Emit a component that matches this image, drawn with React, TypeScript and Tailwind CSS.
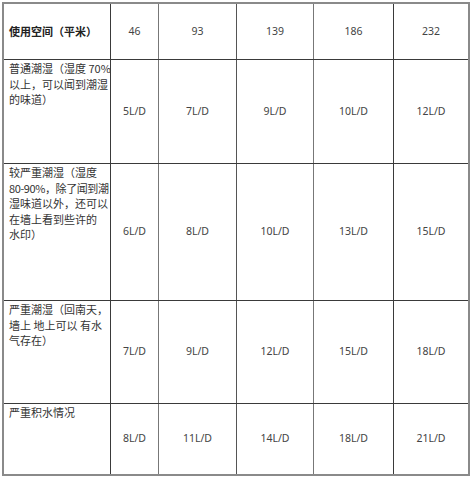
import React from 'react';

const cols = ['46', '93', '139', '186', '232'];

const rows: { lines: string[]; values: string[]; h: string }[] = [
  {
    lines: ['普通潮湿（湿度 70%', '以上，可以闻到潮湿', '的味道）'],
    values: ['5L/D', '7L/D', '9L/D', '10L/D', '12L/D'],
    h: 'h-[104px]',
  },
  {
    lines: ['较严重潮湿（湿度', '80-90%，除了闻到潮', '湿味道以外，还可以', '在墙上看到些许的', '水印）'],
    values: ['6L/D', '8L/D', '10L/D', '13L/D', '15L/D'],
    h: 'h-[137px]',
  },
  {
    lines: ['严重潮湿（回南天，', '墙上 地上可以 有水', '气存在）'],
    values: ['7L/D', '9L/D', '12L/D', '15L/D', '18L/D'],
    h: 'h-[103px]',
  },
  {
    lines: ['严重积水情况'],
    values: ['8L/D', '11L/D', '14L/D', '18L/D', '21L/D'],
    h: 'h-[71px]',
  },
];

const widths = ['w-[48px]', 'w-[78px]', 'w-[77px]', 'w-[80px]', 'w-[75px]'];
const lineColors = ['border-[#3a3a3a]', 'border-[#777]', 'border-[#555]', 'border-[#777]', 'border-[#3a3a3a]'];

const cjk = { fontFamily: '"Noto Sans CJK SC", "Noto Sans", sans-serif' };
const num = { fontFamily: '"Noto Sans", "Liberation Sans", sans-serif' };

export default function App() {
  return (
    <div className="w-[473px] h-[480px] bg-white pt-[2px] pl-[2px]">
      <div className="w-[468px] border-2 border-[#8a8a8a] text-[#333]">
        <div className="flex h-[55px]">
          <div className="w-[106px] flex items-center pl-[5px] text-[11px] font-bold text-[#222] whitespace-nowrap" style={cjk}>
            使用空间（平米）
          </div>
          {cols.map((c, i) => (
            <div
              key={c}
              className={`${widths[i]} border-l ${lineColors[i]} flex items-center justify-center text-[10.5px] text-[#444]`}
              style={num}
            >
              {c}
            </div>
          ))}
        </div>
        {rows.map((r) => (
          <div key={r.lines[0]} className={`flex ${r.h} border-t border-[#3a3a3a]`}>
            <div className="w-[106px] pl-[5px] pt-[1px] text-[11px] leading-[15.5px] text-[#333]" style={cjk}>
              {r.lines.map((l) => (
                <div key={l} className={l.startsWith('80') ? 'whitespace-nowrap tracking-[-0.4px]' : 'whitespace-nowrap'}>
                  {l}
                </div>
              ))}
            </div>
            {r.values.map((v, i) => (
              <div
                key={i}
                className={`${widths[i]} border-l ${lineColors[i]} flex items-center justify-center text-[10.5px] text-[#444]`}
                style={num}
              >
                {v}
              </div>
            ))}
          </div>
        ))}
      </div>
    </div>
  );
}
